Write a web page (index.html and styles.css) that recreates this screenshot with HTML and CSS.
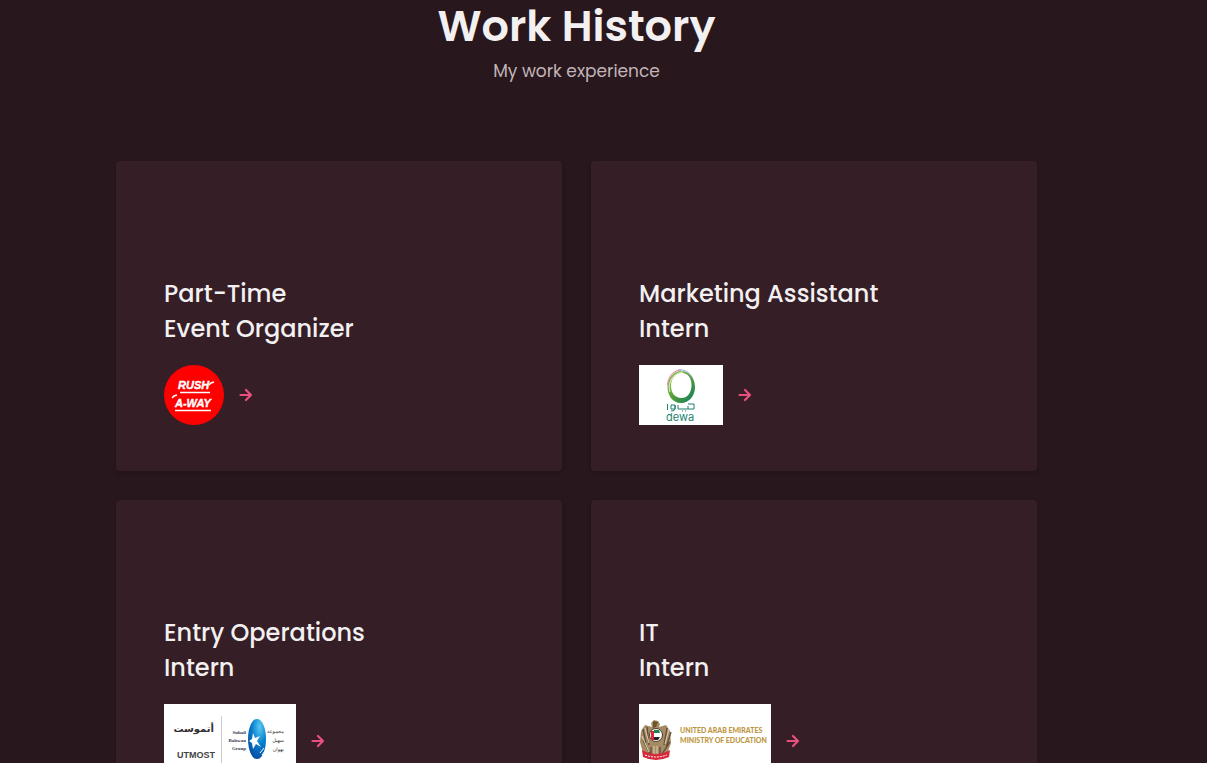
FILE: index.html
```html
<!DOCTYPE html>
<html lang="en">
<head>
<meta charset="utf-8">
<meta name="viewport" content="width=device-width, initial-scale=1">
<title>Work History</title>
<link rel="stylesheet" href="styles.css">
</head>
<body>
<main class="work">
  <header class="work-header">
    <h1 class="work-title">Work History</h1>
    <p class="work-subtitle">My work experience</p>
  </header>
  <div class="work-grid">
    <article class="card">
      <h2 class="card-title">Part-Time<br>Event Organizer</h2>
      <div class="card-row">
        <svg class="logo" width="60" height="60" viewBox="0 0 60 60" role="img" aria-label="Rush-A-Way">
          <circle cx="30" cy="30" r="30" fill="#fe0000"/>
          <g fill="#fff" class="rush">
            <text x="14" y="24">RUSH</text>
            <text x="11" y="42">A-WAY</text>
          </g>
          <path d="M16 27.500H46M11 45.500H47" stroke="#fff" stroke-width="1.300"/>
          <path d="M45 20l2-2 3-1M8 33l2-2 3-1" stroke="#fff" stroke-width="1.600" fill="none"/>
        </svg>
        <button class="card-button" aria-label="View event organizer role"><svg width="14" height="14" viewBox="0 0 14 14"><path d="M1.500 7H12M7 2l5 5-5 5"/></svg></button>
      </div>
    </article>
    <article class="card">
      <h2 class="card-title">Marketing Assistant<br>Intern</h2>
      <div class="card-row">
        <svg class="logo" width="84" height="60" viewBox="0 0 84 60" role="img" aria-label="DEWA">
          <defs><linearGradient id="ring" x1="0" y1="0" x2="1" y2="1"><stop offset="0" stop-color="#a8cb63"/><stop offset=".5" stop-color="#579c39"/><stop offset="1" stop-color="#087e60"/></linearGradient></defs>
          <path fill="#fff" d="M0 0h84v60H0z"/>
          <path fill="url(#ring)" fill-rule="evenodd" d="M42 6C34 6 28.500 13 28.500 22S34 38 42 38s14-7 14-16S50 6 42 6zM43 8C49 8 52.500 13 52.500 20S49 33 42.500 33 32 28 32 21 36 8 43 8z"/>
          <path d="M28.500 20C29 10 36 5 42 5" fill="none" stroke="#ed82a3"/><path d="M39 5c6-1 12 2 15 9" fill="none" stroke="#8aa9d5"/>
          <path d="M31 27C28 18 34 8 44 7" fill="none" stroke="#e4f2cb"/>
          <g fill="none" stroke="#218270"><path d="M28.500 39v6M36 40h-4v4h4v-4 4q0 2-4 2M39 40v4h10v-3M49 39h6v5h-6M43 46h1M46 46h1"/></g>
          <text x="27" y="56" class="dewa">dewa</text>
        </svg>
        <button class="card-button" aria-label="View marketing assistant role"><svg width="14" height="14" viewBox="0 0 14 14"><path d="M1.500 7H12M7 2l5 5-5 5"/></svg></button>
      </div>
    </article>
    <article class="card">
      <h2 class="card-title">Entry Operations<br>Intern</h2>
      <div class="card-row">
        <svg class="logo" width="132" height="74" viewBox="0 0 132 74" role="img" aria-label="Utmost, Suhail Bahwan Group">
          <defs><radialGradient id="globe" cx=".65" cy=".2" r=".85"><stop offset="0" stop-color="#59c9f2"/><stop offset=".5" stop-color="#087fce"/><stop offset="1" stop-color="#064aa0"/></radialGradient></defs>
          <path fill="#fff" d="M0 0h132v74H0z"/>
          <text x="50" y="28" text-anchor="end" class="utmost-ar">أتموست</text>
          <text x="13" y="54" class="utmost">UTMOST</text>
          <path d="M57.500 12v50" stroke="#ccc"/>
          <g class="group"><text x="82" y="30" text-anchor="end">Suhail</text><text x="82" y="38" text-anchor="end">Bahwan</text><text x="82" y="46" text-anchor="end">Group</text></g>
          <ellipse cx="93" cy="35" rx="9" ry="20" fill="url(#globe)"/>
          <path fill="#fff" d="M89 29l2 5 5-2-3 5 4 6-5-3-3 5-1-6-3-2 3-2z"/>
          <path d="M96 49l4-5M98 51l3-4" stroke="#fff" fill="none"/>
          <g class="group-ar"><text x="120" y="29" text-anchor="end">مجموعة</text><text x="120" y="38" text-anchor="end">سهيل</text><text x="120" y="47" text-anchor="end">بهوان</text></g>
        </svg>
        <button class="card-button" aria-label="View entry operations role"><svg width="14" height="14" viewBox="0 0 14 14"><path d="M1.500 7H12M7 2l5 5-5 5"/></svg></button>
      </div>
    </article>
    <article class="card">
      <h2 class="card-title">IT<br>Intern</h2>
      <div class="card-row">
        <svg class="logo" width="132" height="74" viewBox="0 0 132 74" role="img" aria-label="United Arab Emirates Ministry of Education">
          <path fill="#fff" d="M0 0h132v74H0z"/>
          <path fill="#a58b63" d="M12 19l3-3 4 1 2 3-1 3 7-2 4 6 1 12-4 11-5 5H9l-5-6-3-11 1-11 4-6 7 2z"/>
          <path d="M4 25l3 14M8 23l2 18M28 24l-3 17M32 28l-5 16M4 36l7 14M31 38l-8 12M12 43v9M21 43v9" stroke="#5e4c37" stroke-width="1.300"/>
          <path d="M6 24l4 15M30 25l-4 15M3 32l7 16M15 42v9M18 42v9" stroke="#ddcfb2"/>
          <path d="M14 17l5 1-2 5-3 1z" fill="#6d542c"/>
          <circle cx="17" cy="31" r="6.500" fill="#fff" stroke="#4a3b2d"/>
          <path fill="#e32636" d="M12 27h3v9h-3z"/><path fill="#168653" d="M15 26h5l1 3h-6z"/><path fill="#252525" d="M15 33h6l-2 3h-4z"/>
          <path fill="#d6273b" d="M3 46q14 8 28 0l-1 7q-13 6-26 0z"/><path d="M6 51q11 4 22 0" fill="none" stroke="#fff" stroke-dasharray="2 1"/>
          <g class="ministry"><text x="41" y="29">UNITED ARAB EMIRATES</text><text x="41" y="39">MINISTRY OF EDUCATION</text></g>
        </svg>
        <button class="card-button" aria-label="View IT role"><svg width="14" height="14" viewBox="0 0 14 14"><path d="M1.500 7H12M7 2l5 5-5 5"/></svg></button>
      </div>
    </article>
  </div>
</main>
</body>
</html>
```
FILE: styles.css
```css
* { box-sizing: border-box; }
body {
  margin: 0;
  background: #28171c;
  color: #f3f0f1;
  font-family: Poppins, Inter, sans-serif;
}
.work { padding: 0 170px 48px 116px; }
.work-header { text-align: center; padding-bottom: 77px; }
.work-title { margin: 0; font-size: 43px; line-height: 52px; font-weight: 600; }
.work-subtitle { margin: 6px 0 0; font-size: 17px; line-height: 26px; color: #c2b5b9; }
.work-grid { display: grid; grid-template-columns: repeat(2, 1fr); gap: 29px; }
.card {
  padding: 115px 48px 46px;
  background: #351e25;
  border-radius: 4px;
  box-shadow: 0 2px 4px rgba(0, 0, 0, .15);
}
.card-title { margin: 0 0 19px; font-size: 24px; line-height: 35px; font-weight: 500; }
.card-row { display: flex; align-items: center; gap: 15px; }
.logo { display: block; flex: none; }
.card-button { display: flex; padding: 0; border: 0; background: none; cursor: pointer; }
.card-button path { fill: none; stroke: #e8507f; stroke-width: 2.2; stroke-linecap: round; stroke-linejoin: round; }
.rush { font: italic bold 11px "Liberation Sans", sans-serif; stroke: #fff; stroke-width: .4; }
.dewa { font: 11px Inter, sans-serif; fill: #218270; }
.utmost-ar { font: bold 10px "DejaVu Sans", sans-serif; fill: #303030; }
.utmost { font: bold 9px "Liberation Sans", sans-serif; fill: #444; }
.group { font: bold 5px "Liberation Serif", serif; fill: #343854; }
.group-ar { font: 5px "DejaVu Sans", sans-serif; fill: #333; }
.ministry { font: 900 7px Lato, sans-serif; fill: #bd963f; }
```
